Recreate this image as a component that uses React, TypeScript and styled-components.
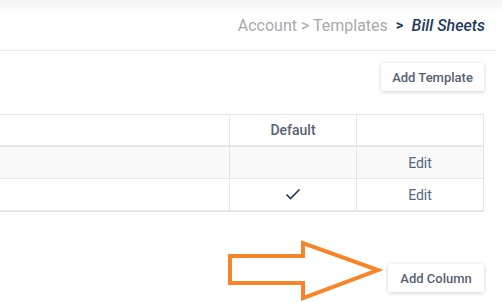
import styled, { createGlobalStyle } from "styled-components";

const GlobalStyle = createGlobalStyle`
  html, body {
    margin: 0;
    padding: 0;
    background: #ffffff;
    font-family: Roboto, "Liberation Sans", sans-serif;
  }
`;

const Page = styled.div`
  position: relative;
  width: 502px;
  height: 302px;
  overflow: hidden;
  background: linear-gradient(to bottom, #f4f4f4 0px, #ffffff 14px);
`;

const Header = styled.div`
  height: 50px;
  margin-right: 6px;
  border-bottom: 1px solid #ebebeb;
  display: flex;
  align-items: center;
  justify-content: flex-end;
  padding-right: 11px;
`;

const Crumb = styled.span<{ $current?: boolean }>`
  font-size: 16px;
  color: ${(p) => (p.$current ? "#1f3a5c" : "#a9a9a9")};
  font-style: ${(p) => (p.$current ? "italic" : "normal")};
  font-weight: ${(p) => (p.$current ? 500 : 400)};
`;

const Sep = styled.span`
  font-size: 15px;
  font-weight: 700;
  color: #1f3a5c;
  margin: 0 8px 0 8px;
`;

const Toolbar = styled.div<{ $top: number }>`
  display: flex;
  justify-content: flex-end;
  padding-right: 18px;
  margin-top: ${(p) => p.$top}px;
`;

const Button = styled.button<{ $w: number }>`
  width: ${(p) => p.$w}px;
  height: 28px;
  border: none;
  background: #ffffff;
  border-radius: 2px;
  box-shadow: 0 1px 4px rgba(0, 0, 0, 0.2);
  font-family: Roboto, "Liberation Sans", sans-serif;
  font-size: 13px;
  font-weight: 500;
  color: #576274;
  padding: 0;
`;

const Table = styled.div`
  margin-top: 23px;
  width: 483px;
  display: grid;
  grid-template-columns: 229px 127px 127px;
  border-top: 1px solid #e6e6e6;
  border-right: 1px solid #e6e6e6;
  border-bottom: 2px solid #e6e6e6;
`;

const Cell = styled.div<{ $head?: boolean; $shade?: boolean; $last?: boolean }>`
  height: ${(p) => (p.$head ? 30 : 31)}px;
  display: flex;
  align-items: center;
  justify-content: center;
  background: ${(p) => (p.$shade ? "#f9f9f9" : "#ffffff")};
  border-left: 1px solid #e6e6e6;
  border-bottom: ${(p) => (p.$head ? "2px" : p.$last ? "0" : "1px")} solid #e6e6e6;
  font-size: 14px;
  font-weight: ${(p) => (p.$head ? 500 : 400)};
  color: ${(p) => (p.$head ? "#576274" : "#50667d")};
  &:nth-child(3n + 1) {
    border-left: none;
  }
`;

const Arrow = styled.svg`
  position: absolute;
  left: 226px;
  top: 239px;
`;

function Check() {
  return (
    <svg width="16" height="13" viewBox="0 0 16 13">
      <path d="M1.5 6.5 L5.5 10.5 L14.5 1.5" fill="none" stroke="#1f3a5c" strokeWidth="1.6" />
    </svg>
  );
}

export default function App() {
  const rows = [
    { def: false, shade: true },
    { def: true, shade: false },
  ];
  return (
    <Page>
      <GlobalStyle />
      <Header>
        <Crumb>Account &gt; Templates</Crumb>
        <Sep>&gt;</Sep>
        <Crumb $current>Bill Sheets</Crumb>
      </Header>
      <Toolbar $top={12}>
        <Button $w={103}>Add Template</Button>
      </Toolbar>
      <Table>
        <Cell $head />
        <Cell $head>Default</Cell>
        <Cell $head />
        {rows.map((r, i) => (
          <>
            <Cell key={`a${i}`} $shade={r.shade} $last={i === rows.length - 1} />
            <Cell key={`b${i}`} $shade={r.shade} $last={i === rows.length - 1}>
              {r.def && <Check />}
            </Cell>
            <Cell key={`c${i}`} $shade={r.shade} $last={i === rows.length - 1}>
              Edit
            </Cell>
          </>
        ))}
      </Table>
      <Toolbar $top={52}>
        <Button $w={96}>Add Column</Button>
      </Toolbar>
      <Arrow width="160" height="64" viewBox="0 0 160 64">
        <path
          d="M4 17 L77 17 L77 4 L152 31 L77 59 L77 44 L4 44 Z"
          fill="none"
          stroke="#f6852a"
          strokeWidth="4"
          strokeLinejoin="miter"
        />
      </Arrow>
    </Page>
  );
}
